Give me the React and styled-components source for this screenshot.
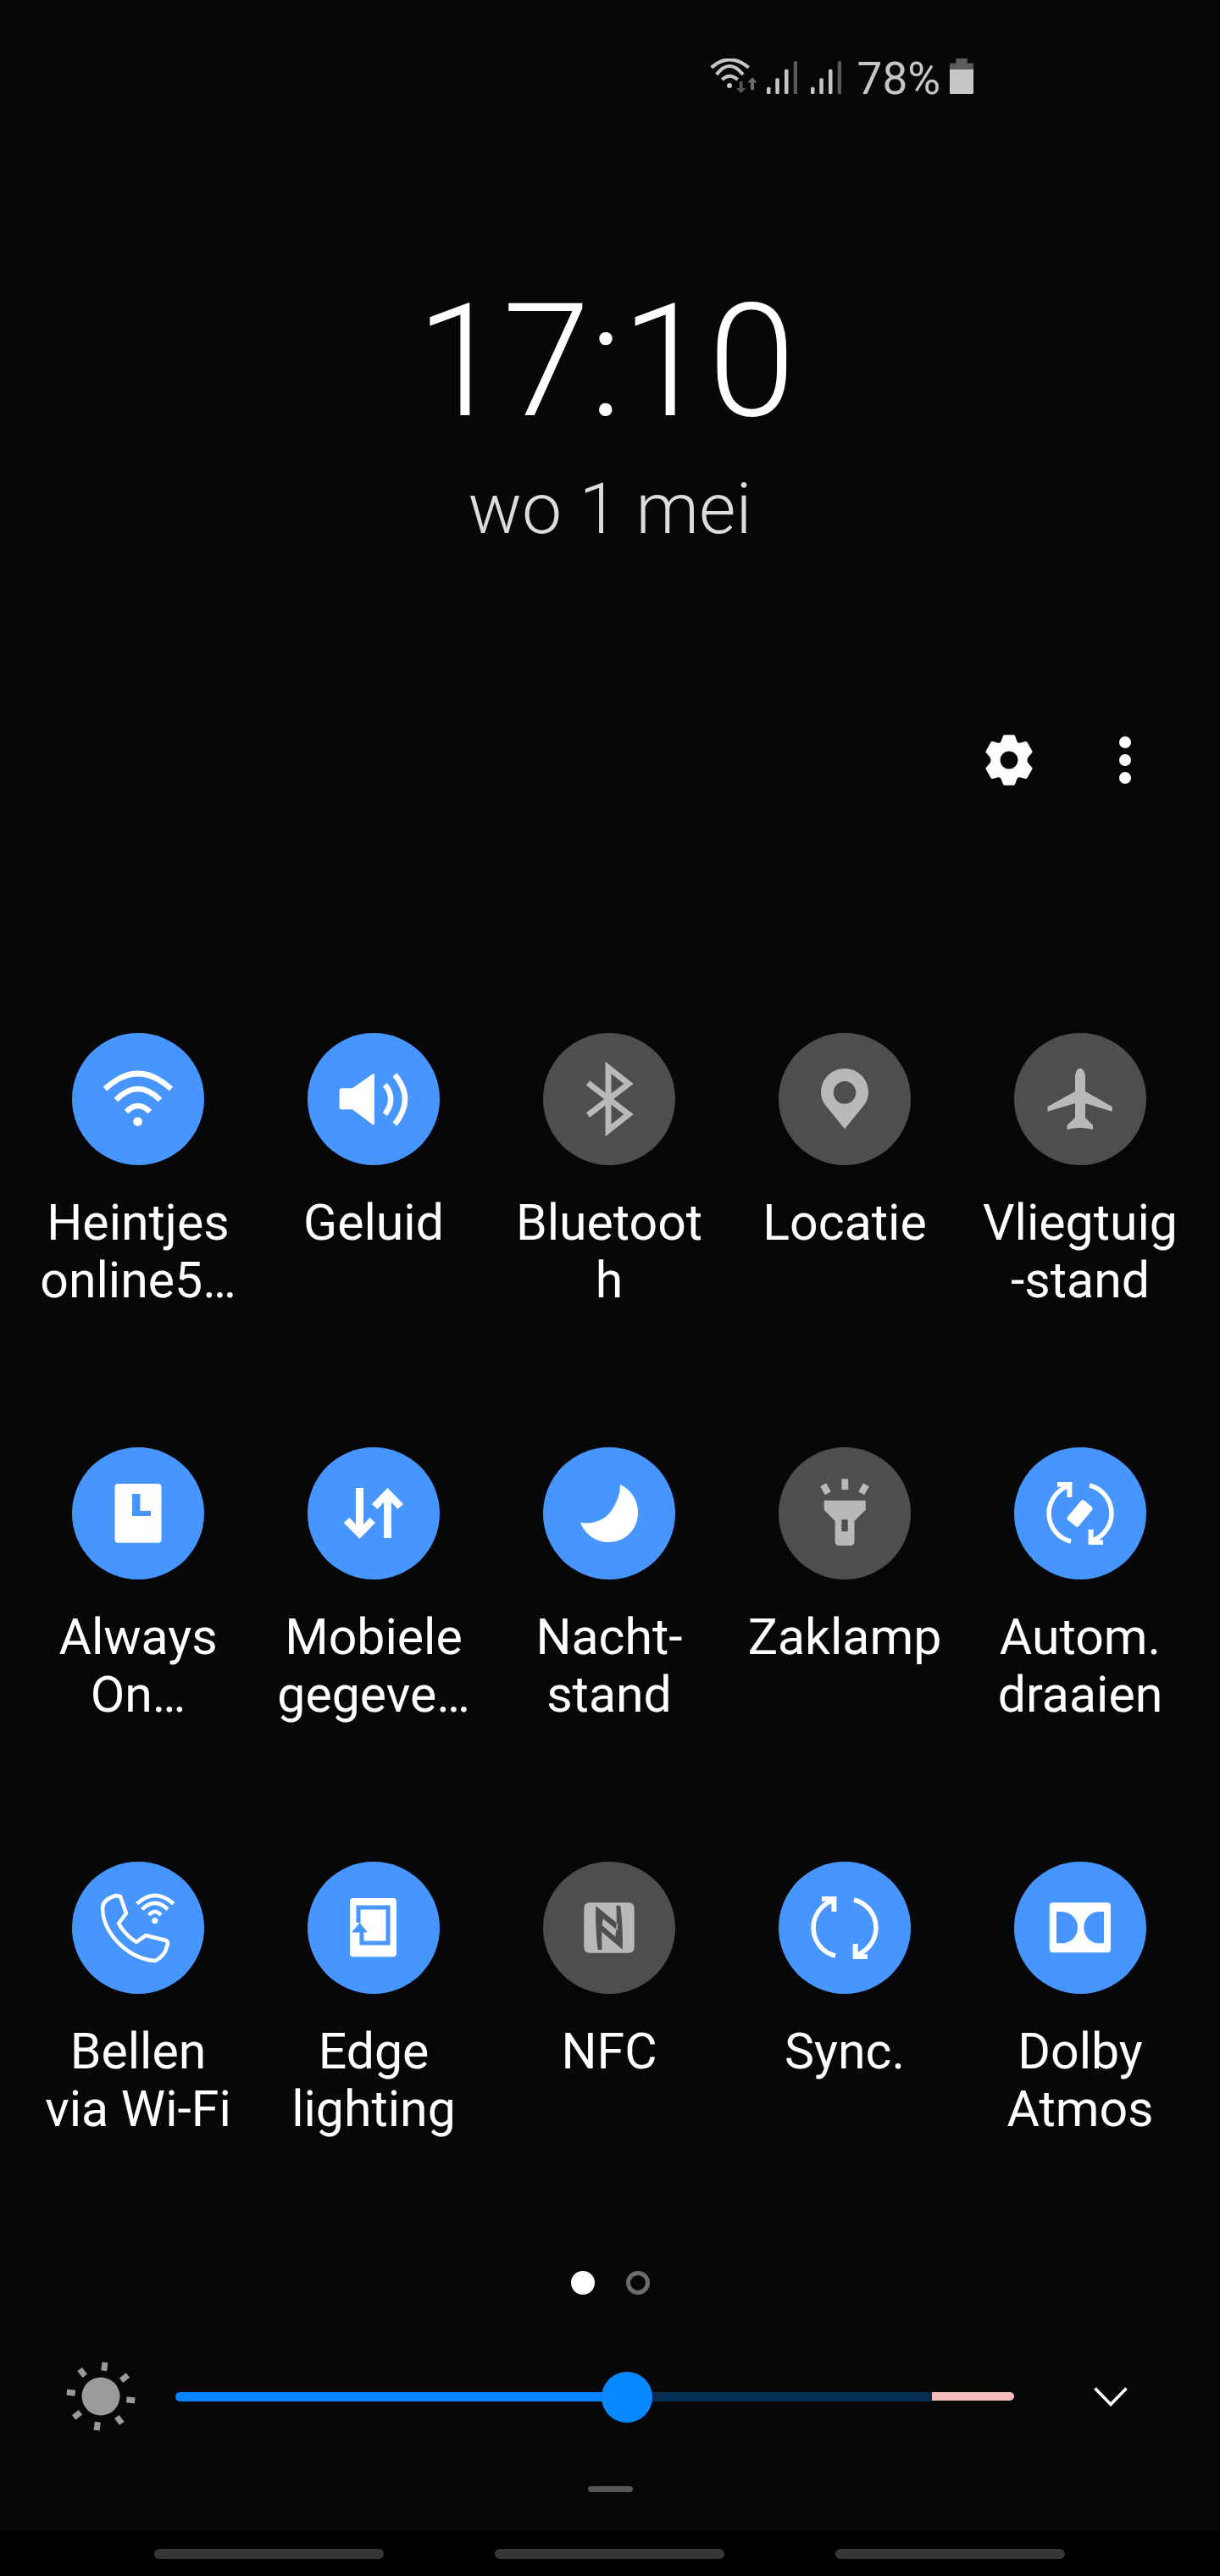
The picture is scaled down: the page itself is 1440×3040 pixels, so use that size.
import React from 'react'
import styled, { createGlobalStyle } from 'styled-components'

const Global = createGlobalStyle`
  html, body {
    margin: 0;
    padding: 0;
    background: #070707;
  }
`

const Page = styled.div`
  width: 1440px;
  height: 3040px;
  display: flex;
  flex-direction: column;
  background: #070707;
  color: #fff;
  font-family: Roboto, "Liberation Sans", sans-serif;
  overflow: hidden;
`

const StatusBar = styled.div`
  display: flex;
  justify-content: flex-end;
  align-items: flex-start;
  height: 42px;
  padding: 69px 291px 0 0;
`
const StatusIcon = styled.svg`
  display: block;
  flex: none;
  margin-left: ${p => p.$gap}px;
`
const Battery = styled.span`
  height: 42px;
  margin-left: 19px;
  font-size: 53px;
  line-height: 48px;
  color: #c6c6c6;
`

const Clock = styled.div`
  margin-top: 222px;
  text-align: center;
`
const Time = styled.div`
  padding-right: 11px;
  font-size: 186px;
  line-height: 186px;
  font-weight: 300;
  letter-spacing: -1px;
`
const DateLine = styled.div`
  margin-top: 40px;
  font-size: 84px;
  line-height: 84px;
  font-weight: 300;
  color: #dcdcdc;
`

const Toolbar = styled.div`
  display: flex;
  justify-content: flex-end;
  align-items: center;
  gap: 102px;
  margin-top: 224px;
  padding-right: 105px;
`
const Dots = styled.div`
  display: flex;
  flex-direction: column;
  gap: 7px;
`
const Dot = styled.span`
  width: 14px;
  height: 14px;
  border-radius: 50%;
  background: #fff;
`

const Grid = styled.div`
  display: grid;
  grid-template-columns: repeat(5, 278px);
  row-gap: 163px;
  margin-top: 292px;
  padding-left: 24px;
`
const Tile = styled.div`
  height: 326px;
  display: flex;
  flex-direction: column;
  align-items: center;
`
const Round = styled.div`
  width: 156px;
  height: 156px;
  border-radius: 50%;
  flex: none;
  background: ${p => (p.$on ? '#4796ff' : '#4e4e4e')};
  color: ${p => (p.$on ? '#fff' : '#b9b9b9')};
`
const Glyph = styled.svg`
  display: block;
  width: 156px;
  height: 156px;
`
const Label = styled.div`
  margin-top: 34px;
  font-size: 59px;
  line-height: 68px;
  text-align: center;
  white-space: nowrap;
`

const Pager = styled.div`
  display: flex;
  justify-content: center;
  gap: 37px;
  margin-top: 157px;
`
const PagerDot = styled.span`
  box-sizing: border-box;
  width: 28px;
  height: 28px;
  border-radius: 50%;
  background: ${p => (p.$active ? '#fff' : 'transparent')};
  border: ${p => (p.$active ? 'none' : '5px solid #6c6c6c')};
`

const Brightness = styled.div`
  display: flex;
  align-items: center;
  margin-top: 79px;
  padding-left: 78px;
`
const SunIcon = styled.svg`
  flex: none;
`
const Track = styled.div`
  position: relative;
  display: flex;
  width: 990px;
  height: 11px;
  margin: 0 94px 0 47px;
`
const Fill = styled.div`
  width: ${p => p.$value}px;
  background: #0a84ff;
  border-radius: 6px 0 0 6px;
`
const Rest = styled.div`
  flex: 1;
  background: #062e54;
`
const Limit = styled.div`
  width: 97px;
  height: 10px;
  background: #f6bdbd;
  border-radius: 0 5px 5px 0;
`
const Thumb = styled.div`
  position: absolute;
  top: -24px;
  left: ${p => p.$value - 30}px;
  width: 60px;
  height: 60px;
  border-radius: 50%;
  background: #0a88ff;
`

const Handle = styled.div`
  align-self: center;
  width: 53px;
  height: 7px;
  margin-top: 65px;
  border-radius: 4px;
  background: #565656;
`

const NavBar = styled.div`
  margin-top: auto;
  height: 53px;
  box-sizing: border-box;
  padding: 21px 183px 0 182px;
  display: flex;
  justify-content: space-between;
  background: #000;
`
const NavPill = styled.span`
  width: 271px;
  height: 12px;
  border-radius: 6px;
  background: #363636;
`

const Stroke = ({ children, w = 6.5 }) => (
  <g fill="none" stroke="currentColor" strokeWidth={w}>{children}</g>
)

const SyncArrows = () => {
  const half = (
    <>
      <path d="M63.5 46A34 34 0 0 0 67 111" fill="none" stroke="currentColor" strokeWidth="5.5" />
      <path d="M51 41H68.4V59H62.4V46.7H51Z" fill="currentColor" />
    </>
  )
  return (
    <>
      <g>{half}</g>
      <g transform="rotate(180 78 78)">{half}</g>
    </>
  )
}

const icons = {
  wifi: (
    <>
      <Stroke>
        <path d="M39 66Q77.6 30 117 66" />
        <path d="M52 79Q77.6 53 104 79" />
        <path d="M64 93Q77.6 79 92 93" />
      </Stroke>
      <circle cx="77.6" cy="104.5" r="5.3" fill="currentColor" />
    </>
  ),
  sound: (
    <>
      <path d="M40 65.3H53L76 49Q79 47 79 50V106Q79 110 76 107.6L53 90.3H40Q37.6 90.3 37.6 88V68Q37.6 65.3 40 65.3Z" fill="currentColor" />
      <Stroke>
        <path d="M91.4 61Q105 78 91.4 96" />
        <path d="M103 49.3Q127 78 103 107.7" />
      </Stroke>
    </>
  ),
  bluetooth: (
    <Stroke w={7}>
      <path d="M53 97L101 60L77 41V115L101 96L53 59" />
    </Stroke>
  ),
  location: (
    <path
      fillRule="evenodd"
      fill="currentColor"
      d="M78 42C62.5 42 50 54.5 50 70C50 76 52 81 55 85L78 113.3L101 85C104 81 106 76 106 70C106 54.5 93.5 42 78 42ZM78 57A13.3 13.3 0 1 1 78 83.6A13.3 13.3 0 1 1 78 57Z"
    />
  ),
  plane: (
    <path
      fill="currentColor"
      d="M78 41.7C81.5 41.7 84 47 84 52V69L115.7 87V92.7L84 83V100L93 109V114Q85 112 78 112Q71 112 62.4 114V109L72 100V83L39.5 92.7V87L72 69V52C72 47 74.5 41.7 78 41.7Z"
    />
  ),
  alwaysOn: (
    <path
      fillRule="evenodd"
      fill="currentColor"
      d="M54.5 43H101.5Q105.5 43 105.5 47V108.7Q105.5 112.7 101.5 112.7H54.5Q50.5 112.7 50.5 108.7V47Q50.5 43 54.5 43ZM71 55V81H93V75H80.4V55Z"
    />
  ),
  data: (
    <path
      fill="currentColor"
      d="M94.5 48L113 67L106.5 73L99 65V107H90V65L82.5 73L75.8 67ZM61.5 108L80 89L73.5 83L66 91V48H57V91L49.5 83L42.7 89Z"
    />
  ),
  moon: (
    <path
      fill="currentColor"
      d="M90.5 43.7C104 50 112 62 112 77C112 97 97 112 77 112C62 112 49 102 44 88.7C56 91 74 88 83 71C88 62 92 52 90.5 43.7Z"
    />
  ),
  torch: (
    <>
      <rect x="74.4" y="37.3" width="7.8" height="12.7" fill="currentColor" />
      <rect x="51.5" y="43.5" width="8" height="11.5" transform="rotate(-30 55.5 49.3)" fill="currentColor" />
      <rect x="96.5" y="43.5" width="8" height="11.5" transform="rotate(30 100.5 49.3)" fill="currentColor" />
      <path
        fillRule="evenodd"
        fill="currentColor"
        d="M53.7 62.7H102.8V73.7L89.5 87V111Q89.5 116 84.5 116H71.6Q66.6 116 66.6 111V87L53.7 73.7ZM74.4 85.3V99.3H81.7V85.3Z"
      />
    </>
  ),
  rotate: (
    <>
      <SyncArrows />
      <rect x="69.1" y="63" width="17" height="30" rx="3" transform="rotate(40 77.6 78)" fill="currentColor" />
    </>
  ),
  wifiCall: (
    <>
      <Stroke w={4.5}>
        <path strokeLinejoin="round" d="M52 40L57 41L64 61L55 73C60 82 67 89 76 95L87 87L111 93Q113 94 113 97L110 106Q105 114 98 117C65 114 36 84 36 54Q37 44 52 40Z" />
      </Stroke>
      <Stroke w={4.5}>
        <path d="M76.6 49.7Q97.8 30 120 49.7" />
        <path d="M82.6 56.3Q97.8 41.5 113 56.3" />
        <path d="M90.5 63Q97.8 55 105 63" />
      </Stroke>
      <circle cx="97.8" cy="69.7" r="3.5" fill="currentColor" />
    </>
  ),
  edge: (
    <>
      <rect x="50" y="43" width="55" height="69.3" rx="4" fill="currentColor" />
      <path d="M60 72V54H95V96H64V80" fill="none" stroke="#4796ff" strokeWidth="5" />
      <path d="M61.5 72L71 83.5H52Z" fill="#4796ff" />
    </>
  ),
  nfc: (
    <path
      fillRule="evenodd"
      fill="currentColor"
      d="M55.3 48.3H100.7Q107.7 48.3 107.7 55.3V100.7Q107.7 107.7 100.7 107.7H55.3Q48.3 107.7 48.3 100.7V55.3Q48.3 48.3 55.3 48.3ZM62.3 52.3L88 73V81.3L70.7 67.3C69 76.3 69 93 69.7 104H64.7C62.7 89.7 61.7 69.7 62.3 52.3ZM93.7 103.7L69.5 83V74.7L85.3 88.7C87 79.7 87 63 86.3 52H91.3C93.3 66.3 94.3 86.3 93.7 103.7Z"
    />
  ),
  sync: <SyncArrows />,
  dolby: (
    <path
      fillRule="evenodd"
      fill="currentColor"
      d="M45.8 48.3H110Q114 48.3 114 52.3V103.3Q114 107.3 110 107.3H45.8Q41.8 107.3 41.8 103.3V52.3Q41.8 48.3 45.8 48.3ZM50 59V96.3H56C67 96.3 75 88 75 77.7C75 67.3 67 59 56 59ZM106 59H100C90 59 82.3 67.3 82.3 77.7C82.3 88 90 96.3 100 96.3H106Z"
    />
  )
}

const tiles = [
  { icon: 'wifi', on: true, lines: ['Heintjes', 'online5…'] },
  { icon: 'sound', on: true, lines: ['Geluid'] },
  { icon: 'bluetooth', lines: ['Bluetoot', 'h'] },
  { icon: 'location', lines: ['Locatie'] },
  { icon: 'plane', lines: ['Vliegtuig', '-stand'] },
  { icon: 'alwaysOn', on: true, lines: ['Always', 'On…'] },
  { icon: 'data', on: true, lines: ['Mobiele', 'gegeve…'] },
  { icon: 'moon', on: true, lines: ['Nacht-', 'stand'] },
  { icon: 'torch', lines: ['Zaklamp'] },
  { icon: 'rotate', on: true, lines: ['Autom.', 'draaien'] },
  { icon: 'wifiCall', on: true, lines: ['Bellen', 'via Wi-Fi'] },
  { icon: 'edge', on: true, lines: ['Edge', 'lighting'] },
  { icon: 'nfc', lines: ['NFC'] },
  { icon: 'sync', on: true, lines: ['Sync.'] },
  { icon: 'dolby', on: true, lines: ['Dolby', 'Atmos'] }
]

const SignalBars = ({ gap }) => (
  <StatusIcon $gap={gap} width="36" height="42" viewBox="0 0 36 42">
    <rect x="0" y="33.7" width="4.5" height="8.3" rx="1.5" fill="#c6c6c6" />
    <rect x="10.3" y="23.3" width="4.5" height="18.7" rx="1.5" fill="#c6c6c6" />
    <rect x="21" y="12.7" width="4.5" height="29.3" rx="1.5" fill="#c6c6c6" />
    <rect x="31.7" y="3.3" width="4.5" height="38.7" rx="1.5" fill="#5a5a5a" />
  </StatusIcon>
)

const Sun = () => (
  <SunIcon width="82" height="82" viewBox="0 0 82 82">
    <circle cx="41" cy="41" r="22.5" fill="#9b9b9b" />
    {[0, 1, 2, 3, 4, 5, 6, 7].map(i => (
      <rect key={i} x="37.5" y="0.5" width="7" height="10" fill="#9b9b9b" transform={`rotate(${7 + i * 45} 41 41)`} />
    ))}
  </SunIcon>
)

export default function App() {
  const brightness = 533

  return (
    <Page>
      <Global />
      <StatusBar>
        <StatusIcon $gap={0} width="56" height="42" viewBox="0 0 56 42">
          <g fill="none" stroke="#c6c6c6" strokeWidth="4">
            <path d="M1.7 10.7Q23 -8 45.7 10.7" />
            <path d="M7.7 19Q23 -1 39 19" />
            <path d="M14.3 25Q23 16.5 32.7 25" />
          </g>
          <circle cx="23" cy="32" r="3" fill="#c6c6c6" />
          <path d="M34.8 27H38.6V35H42.4L36.7 41L31 35H34.8Z" fill="#565656" />
          <path d="M50 22.3L55.7 28.5H52V37H48V28.5H44.3Z" fill="#6e6e6e" />
        </StatusIcon>
        <SignalBars gap={11} />
        <SignalBars gap={16} />
        <Battery>78%</Battery>
        <StatusIcon $gap={11} width="28" height="42" viewBox="0 0 28 42">
          <path d="M7.3 0H20.7V5.5H26.5Q28 5.5 28 7V13H0V7Q0 5.5 1.5 5.5H7.3Z" fill="#5c5c5c" />
          <path d="M0 13H28V40.5Q28 42 26.5 42H1.5Q0 42 0 40.5Z" fill="#c6c6c6" />
        </StatusIcon>
      </StatusBar>

      <Clock>
        <Time>17:10</Time>
        <DateLine>wo 1 mei</DateLine>
      </Clock>

      <Toolbar>
        <svg width="56" height="60" viewBox="133 86 160 170" fill="#fff">
          <path
            fillRule="evenodd"
            d="M198 86H228Q232 86 234 92L240 108Q243 115 250 113L268 108Q272 107 275 112L291 140Q293 144 290 147L278 160Q271 171 278 182L290 195Q293 198 291 202L275 230Q272 235 268 234L250 229Q243 227 240 234L234 250Q232 256 228 256H198Q194 256 192 250L186 234Q183 227 176 229L158 234Q154 235 151 230L135 202Q133 198 136 195L148 182Q155 171 148 160L136 147Q133 144 135 140L151 112Q154 107 158 108L176 113Q183 115 186 108L192 92Q194 86 198 86ZM213 141A30 30 0 1 0 213 201A30 30 0 1 0 213 141Z"
          />
        </svg>
        <Dots>
          <Dot />
          <Dot />
          <Dot />
        </Dots>
      </Toolbar>

      <Grid>
        {tiles.map(tile => (
          <Tile key={tile.icon}>
            <Round $on={tile.on}>
              <Glyph viewBox="0 0 156 156">{icons[tile.icon]}</Glyph>
            </Round>
            <Label>
              {tile.lines.map(line => (
                <div key={line}>{line}</div>
              ))}
            </Label>
          </Tile>
        ))}
      </Grid>

      <Pager>
        <PagerDot $active />
        <PagerDot />
      </Pager>

      <Brightness>
        <Sun />
        <Track>
          <Fill $value={brightness} />
          <Rest />
          <Limit />
          <Thumb $value={brightness} />
        </Track>
        <svg width="40" height="23" viewBox="0 0 40 23" fill="none" stroke="#fff" strokeWidth="3.6">
          <path d="M1.5 1.5L20 20.5L38.5 1.5" />
        </svg>
      </Brightness>

      <Handle />

      <NavBar>
        <NavPill />
        <NavPill />
        <NavPill />
      </NavBar>
    </Page>
  )
}
